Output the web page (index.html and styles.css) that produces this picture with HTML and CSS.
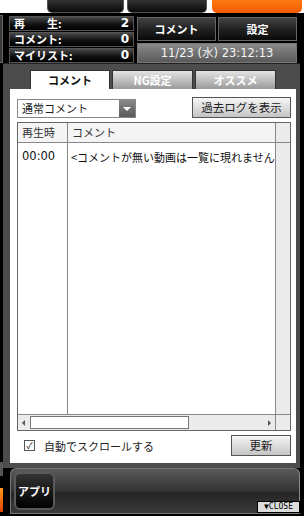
FILE: index.html
```html
<!DOCTYPE html>
<html lang="ja">
  <head>
    <meta charset="UTF-8" />
    <meta name="viewport" content="width=device-width, initial-scale=1.0" />
    <title>コメントパネル</title>
    <link rel="stylesheet" href="styles.css">
  </head>
  <body>
    <div class="topstrip">
      <div class="tip dark t1"></div>
      <div class="tip dark t2"></div>
      <div class="tip orange"></div>
    </div>
    <div class="frame">
      <div class="side">
        <div class="side-top"></div>
        <div class="side-fill"></div>
        <div class="side-mid"></div>
        <div class="side-orange"></div>
      </div>
      <div class="main">
        <div class="header">
          <div class="stats">
            <div class="stat-row"><span class="lbl">再　　生:</span><span class="val">2</span></div>
            <div class="stat-row"><span class="lbl">コメント:</span><span class="val">0</span></div>
            <div class="stat-row"><span class="lbl">マイリスト:</span><span class="val">0</span></div>
          </div>
          <div class="controls">
            <div class="btns">
              <div class="hbtn">コメント</div>
              <div class="hbtn">設定</div>
            </div>
            <div class="clock">11/23 (水) 23:12:13</div>
          </div>
        </div>
        <div class="panel">
          <div class="tabs">
            <div class="tab active">コメント</div>
            <div class="tab">NG設定</div>
            <div class="tab">オススメ</div>
          </div>
          <div class="sheet">
            <div class="toolbar">
              <div class="select">
                <span class="select-text">通常コメント</span>
                <span class="select-arrow"></span>
              </div>
              <div class="btn">過去ログを表示</div>
            </div>
            <div class="table">
              <div class="table-body">
                <div class="cols">
                  <div class="col col-time">
                    <div class="th">再生時</div>
                    <div class="td">00:00</div>
                  </div>
                  <div class="col col-text">
                    <div class="th">コメント</div>
                    <div class="td">&lt;コメントが無い動画は一覧に現れません</div>
                  </div>
                </div>
                <div class="vscroll">
                  <div class="vscroll-head"></div>
                </div>
              </div>
              <div class="hscroll">
                <div class="arrow left"></div>
                <div class="thumb"></div>
                <div class="track"></div>
                <div class="arrow right"></div>
                <div class="corner"></div>
              </div>
            </div>
            <div class="footer">
              <label class="check"><span class="box">✓</span>自動でスクロールする</label>
              <div class="btn small">更新</div>
            </div>
          </div>
        </div>
        <div class="dock">
          <div class="app">アプリ</div>
          <div class="close">▼CLOSE</div>
        </div>
      </div>
    </div>
  </body>
</html>
```

FILE: styles.css
```css
body {
  margin: 0;
  width: 304px;
  height: 522px;
  overflow: hidden;
  background: #fff;
  font-family: "Noto Sans CJK JP", "Liberation Sans", sans-serif;
}
.topstrip {
  height: 13px;
  display: flex;
  gap: 3px;
  padding-left: 47px;
  background: #fff;
}
.tip {
  height: 13px;
  border-radius: 0 0 5px 5px;
}
.dark {
  background: linear-gradient(#333, #0a0a0a);
  border: 1px solid #555;
  border-top: none;
  box-sizing: border-box;
}
.t1 {
  width: 77px;
}
.t2 {
  width: 80px;
}
.orange {
  width: 90px;
  margin-left: 2px;
  background: linear-gradient(#ff7a10, #f05a00);
}
.frame {
  height: 503px;
  display: flex;
  background: #000;
}
.side {
  width: 3px;
  display: flex;
  flex-direction: column;
}
.side-top {
  height: 46px;
  margin-top: 2px;
  background: #3a3a3a;
  border: 1px solid #666;
  border-left: none;
}
.side-fill {
  flex: 1;
}
.side-mid {
  height: 14px;
  background: #555;
}
.side-orange {
  height: 24px;
  margin: 12px 0 4px;
  background: linear-gradient(#ff9a20, #e04000);
}
.main {
  width: 297px;
  display: flex;
  flex-direction: column;
}
.header {
  display: flex;
  gap: 3px;
  padding: 3px 0 0 6px;
  height: 47px;
}
.stats {
  width: 125px;
  display: flex;
  flex-direction: column;
}
.stat-row {
  height: 15px;
  box-sizing: border-box;
  border: 1px solid #555;
  margin-bottom: 1px;
  background: linear-gradient(#4a4a4a, #111 55%, #000);
  color: #fff;
  font-weight: bold;
  font-size: 11px;
  line-height: 13px;
  display: flex;
  justify-content: space-between;
  padding: 0 4px;
}
.val {
  font-family: "DejaVu Sans", sans-serif;
  font-size: 12px;
}
.controls {
  width: 160px;
  display: flex;
  flex-direction: column;
  gap: 2px;
}
.btns {
  display: flex;
  gap: 2px;
  margin-top: 1px;
}
.hbtn {
  flex: 1;
  height: 24px;
  box-sizing: border-box;
  border: 1px solid #666;
  background: linear-gradient(#444, #222 50%, #0a0a0a);
  color: #fff;
  font-weight: bold;
  font-size: 11px;
  line-height: 22px;
  text-align: center;
}
.clock {
  height: 20px;
  box-sizing: border-box;
  border: 1px solid #777;
  background: linear-gradient(#8a8a8a, #5a5a5a);
  color: #f4f4f4;
  font-family: "DejaVu Sans", "Noto Sans CJK JP", sans-serif;
  font-size: 11.5px;
  line-height: 18px;
  text-align: center;
}
.panel {
  background: #4c4c4c;
  padding: 6px 4px 5px 7px;
  border-top: 1px solid #222;
}
.tabs {
  display: flex;
  gap: 2px;
  padding-left: 20px;
}
.tab {
  width: 81px;
  height: 19px;
  box-sizing: border-box;
  border: 1px solid #333;
  border-bottom: none;
  background: linear-gradient(#e4e4e4, #9a9a9a);
  color: #fff;
  font-weight: bold;
  font-size: 11px;
  line-height: 18px;
  text-align: center;
}
.tab.active {
  width: 80px;
  background: #fff;
  color: #111;
}
.sheet {
  background: #fff;
  height: 374px;
  padding: 8px 5px 0 7px;
  box-sizing: border-box;
  display: flex;
  flex-direction: column;
  font-size: 11px;
}
.toolbar {
  display: flex;
  justify-content: space-between;
  align-items: flex-start;
}
.select {
  width: 119px;
  height: 19px;
  margin-top: 2px;
  box-sizing: border-box;
  border: 1px solid #888;
  display: flex;
  color: #222;
}
.select-text {
  flex: 1;
  padding-left: 4px;
  line-height: 17px;
}
.select-arrow {
  width: 16px;
  background: linear-gradient(#888, #5a5a5a);
  position: relative;
}
.select-arrow::after {
  content: "";
  position: absolute;
  left: 4px;
  top: 7px;
  border-left: 4px solid transparent;
  border-right: 4px solid transparent;
  border-top: 4px solid #fff;
}
.btn {
  width: 99px;
  height: 21px;
  box-sizing: border-box;
  border: 1px solid #555;
  background: linear-gradient(#f6f6f6, #c4c4c4);
  font-size: 11.5px;
  color: #222;
  line-height: 19px;
  text-align: center;
}
.btn.small {
  width: 60px;
  height: 21px;
}
.table {
  margin-top: 4px;
  height: 309px;
  box-sizing: border-box;
  border: 1px solid #666;
  display: flex;
  flex-direction: column;
}
.table-body {
  flex: 1;
  display: flex;
  min-height: 0;
}
.cols {
  flex: 1;
  min-width: 0;
  display: flex;
  overflow: hidden;
}
.col {
  display: flex;
  flex-direction: column;
}
.col-time {
  width: 49px;
  flex-shrink: 0;
  border-right: 1px solid #888;
}
.col-text {
  flex: 1;
  min-width: 0;
  overflow: hidden;
  white-space: nowrap;
}
.th {
  height: 19px;
  border-bottom: 1px solid #888;
  background: #f4f4f4;
  color: #333;
  line-height: 19px;
  padding-left: 4px;
}
.td {
  color: #111;
  padding: 6px 0 0 3px;
}
.col-time .td {
  font-family: "DejaVu Sans", sans-serif;
  font-size: 11.5px;
  padding-left: 4px;
}
.vscroll {
  width: 14px;
  flex-shrink: 0;
  background: #ebebeb;
  border-left: 1px solid #888;
}
.vscroll-head {
  height: 19px;
  border-bottom: 1px solid #888;
}
.hscroll {
  height: 15px;
  border-top: 1px solid #888;
  background: #ebebeb;
  display: flex;
}
.arrow {
  width: 12px;
  position: relative;
}
.arrow::after {
  content: "";
  position: absolute;
  top: 5px;
  border-top: 3px solid transparent;
  border-bottom: 3px solid transparent;
}
.arrow.left::after {
  left: 4px;
  border-right: 3px solid #555;
}
.arrow.right::after {
  left: 5px;
  border-left: 3px solid #555;
}
.thumb {
  width: 159px;
  margin: 1px 0;
  box-sizing: border-box;
  border: 1px solid #777;
  background: #fff;
}
.track {
  flex: 1;
}
.corner {
  width: 14px;
  border-left: 1px solid #888;
}
.footer {
  display: flex;
  justify-content: space-between;
  align-items: center;
  padding: 4px 0 0 7px;
}
.check {
  display: flex;
  align-items: center;
  gap: 9px;
  color: #222;
}
.box {
  width: 9px;
  height: 9px;
  border: 1px solid #555;
  font-size: 9px;
  line-height: 9px;
  text-align: center;
  color: #222;
}
.dock {
  margin: 0 0 2px 7px;
  height: 46px;
  box-sizing: border-box;
  border: 1px solid #777;
  border-right-color: #888;
  border-radius: 6px 6px 0 0;
  background: linear-gradient(#5a5a5a, #333 50%, #262626 55%, #3a3a3a);
  position: relative;
  padding: 3px 0 0 3px;
}
.app {
  width: 41px;
  height: 38px;
  box-sizing: border-box;
  border: 2px solid #5a5a5a;
  border-radius: 6px;
  background: linear-gradient(#333, #000);
  color: #fff;
  font-weight: bold;
  font-size: 11px;
  line-height: 34px;
  text-align: center;
}
.close {
  position: absolute;
  right: -1px;
  bottom: 0;
  width: 43px;
  height: 12px;
  box-sizing: border-box;
  border: 1px solid #000;
  background: #ddd;
  color: #000;
  font-family: "DejaVu Sans Mono", monospace;
  font-size: 8px;
  line-height: 10px;
  text-align: center;
}
```
